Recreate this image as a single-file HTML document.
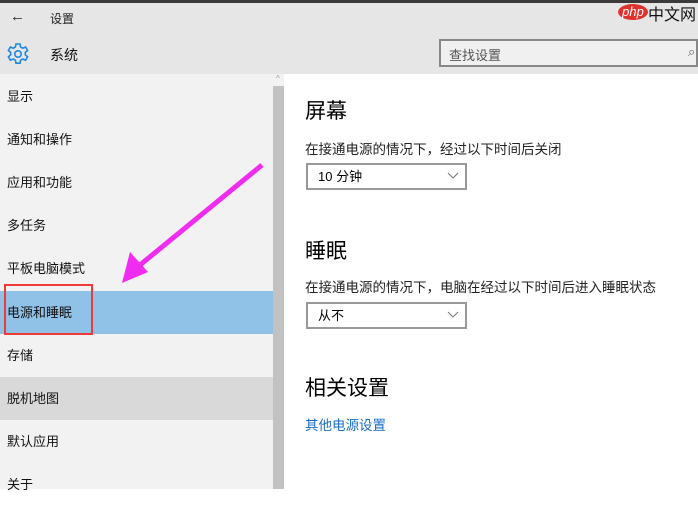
<!DOCTYPE html>
<html><head><meta charset="utf-8"><style>
*{margin:0;padding:0;box-sizing:border-box}
body{width:698px;height:489px;overflow:hidden;position:relative;background:#fff;font-family:"Liberation Sans","Noto Sans CJK SC",sans-serif;color:#000}
.a{position:absolute;white-space:nowrap}
.it{position:absolute;left:0;width:273px;height:43px;font-size:13px;line-height:43px;padding-left:7px;color:#111}
.dd{position:absolute;left:306px;width:161px;border:2px solid #999;background:#fff;font-size:13px;padding-left:10px}
</style></head><body>
<div class="a" style="left:0;top:0;width:698px;height:3px;background:#3a3a3a"></div>
<div class="a" style="left:0;top:3px;width:698px;height:71px;background:#e6e6e6"></div>
<div class="a" style="left:10px;top:8px;font-size:15px;color:#222">←</div>
<div class="a" style="left:50px;top:10px;font-size:12px;color:#222">设置</div>
<svg class="a" style="left:6px;top:42px" width="24" height="24" viewBox="0 0 24 24"><path d="M10 2h4l.6 3 2.2 1.2 2.8-1.2 2 3.4-2.3 2v2.4l2.3 2-2 3.4-2.8-1.2-2.2 1.2-.6 3h-4l-.6-3-2.2-1.2-2.8 1.2-2-3.4 2.3-2v-2.4l-2.3-2 2-3.4 2.8 1.2L9.4 5z" fill="none" stroke="#1e88e5" stroke-width="1.6"/><circle cx="12" cy="12" r="3.2" fill="none" stroke="#1e88e5" stroke-width="1.6"/></svg>
<div class="a" style="left:50px;top:45px;font-size:14px;color:#111">系统</div>
<div class="a" style="left:618px;top:4px;width:30px;height:16px;border-radius:50%;background:#e0322d;color:#fff;font-size:13px;font-style:italic;text-align:center;line-height:15px">php</div>
<div class="a" style="left:648px;top:1px;font-size:16px;color:#111">中文网</div>
<div class="a" style="left:439px;top:39px;width:259px;height:28px;border:2px solid #888;background:#f0f0f0;font-size:13px;color:#555;padding:4px 0 0 8px">查找设置</div>
<div class="a" style="left:688px;top:44px;font-size:13px;color:#666">⌕</div>
<div class="a" style="left:0;top:74px;width:273px;height:415px;background:#f2f2f2"></div>
<div class="a" style="left:273px;top:74px;width:11px;height:415px;background:#f2f2f2"></div>
<div class="a" style="left:273px;top:86px;width:11px;height:403px;background:#c2c2c2"></div>
<div class="a" style="left:276px;top:74px;font-size:8px;color:#999">^</div>
<div class="it" style="top:75px">显示</div>
<div class="it" style="top:118px">通知和操作</div>
<div class="it" style="top:161px">应用和功能</div>
<div class="it" style="top:204px">多任务</div>
<div class="it" style="top:247px">平板电脑模式</div>
<div class="it" style="top:291px;background:#90c1e6">电源和睡眠</div>
<div class="it" style="top:334px">存储</div>
<div class="it" style="top:377px;background:#d9d9d9">脱机地图</div>
<div class="it" style="top:420px">默认应用</div>
<div class="it" style="top:463px">关于</div>
<div class="a" style="left:4px;top:284px;width:89px;height:51px;border:2px solid #f03a3a"></div>
<svg class="a" style="left:0;top:0" width="698" height="489"><line x1="262" y1="165" x2="140" y2="265" stroke="#ef2cf0" stroke-width="5"/><polygon points="122,283 130,252 148,272" fill="#ef2cf0"/></svg>
<div class="a" style="left:305px;top:95px;font-size:21px">屏幕</div>
<div class="a" style="left:305px;top:138px;font-size:13.5px;color:#222">在接通电源的情况下，经过以下时间后关闭</div>
<div class="dd" style="top:163px;height:27px;line-height:23px">10 分钟</div>
<svg class="a" style="left:447px;top:172px" width="12" height="8"><path d="M1 1l5 5 5-5" fill="none" stroke="#777" stroke-width="1"/></svg>
<div class="a" style="left:305px;top:235px;font-size:21px">睡眠</div>
<div class="a" style="left:305px;top:276px;font-size:13.5px;color:#222">在接通电源的情况下，电脑在经过以下时间后进入睡眠状态</div>
<div class="dd" style="top:302px;height:27px;line-height:23px">从不</div>
<svg class="a" style="left:447px;top:311px" width="12" height="8"><path d="M1 1l5 5 5-5" fill="none" stroke="#777" stroke-width="1"/></svg>
<div class="a" style="left:305px;top:372px;font-size:21px">相关设置</div>
<div class="a" style="left:305px;top:414px;font-size:13.5px;color:#1a6dc4">其他电源设置</div>
</body></html>
